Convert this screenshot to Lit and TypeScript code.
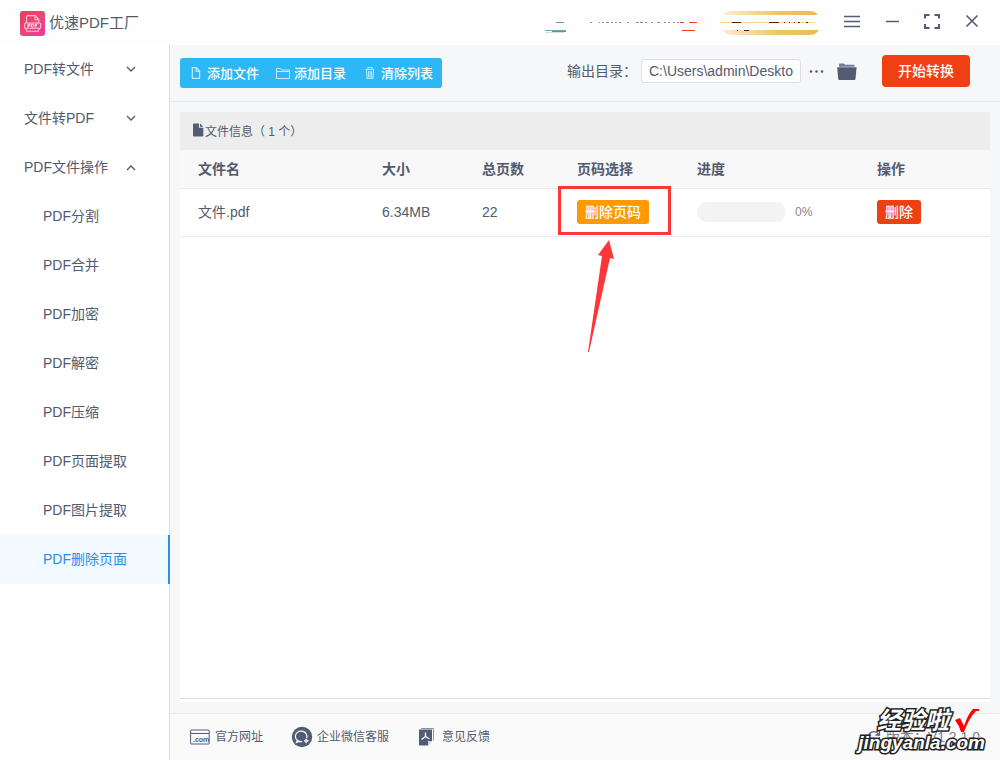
import { LitElement, html, css } from "lit";
import { customElement, property, state } from "lit/decorators.js";
import { classMap } from "lit/directives/class-map.js";

const base = css`
  * {
    box-sizing: border-box;
  }
  button {
    font: inherit;
    color: inherit;
    background: none;
    border: 0;
    padding: 0;
    cursor: pointer;
  }
  svg {
    display: block;
    flex: none;
  }
`;

const groups = [
  { label: "PDF转文件", items: [] as string[] },
  { label: "文件转PDF", items: [] as string[] },
  {
    label: "PDF文件操作",
    items: ["PDF分割", "PDF合并", "PDF加密", "PDF解密", "PDF压缩", "PDF页面提取", "PDF图片提取", "PDF删除页面"],
  },
];

const files = [{ name: "文件.pdf", size: "6.34MB", pages: 22, progress: 0 }];

@customElement("title-bar")
class TitleBar extends LitElement {
  static styles = [
    base,
    css`
      :host {
        display: flex;
        align-items: center;
        height: 45px;
        padding: 0 20px;
        background: #fefefe;
      }
      .brand {
        display: flex;
        align-items: center;
        gap: 4px;
        font-size: 15px;
        line-height: 22px;
        margin-right: auto;
        padding-top: 2px;
      }
      .brand span {
        padding-bottom: 2px;
      }
      .promo {
        margin-right: 22px;
      }
      .window {
        display: flex;
        align-items: center;
        gap: 20px;
        padding-bottom: 3px;
        margin-right: -2px;
      }
    `,
  ];

  render() {
    return html`
      <div class="brand">
        <svg width="25" height="25" viewBox="0 0 25 25">
          <defs>
            <linearGradient id="logo" x1="0" y1="0" x2="1" y2="1">
              <stop offset="0" stop-color="#ea3a5f" />
              <stop offset=".55" stop-color="#ee4679" />
              <stop offset="1" stop-color="#ef35a4" />
            </linearGradient>
          </defs>
          <rect width="25" height="25" rx="3" fill="url(#logo)" />
          <g fill="none" stroke="#fbc3d2" stroke-width="1.1">
            <path d="M6.500 12V5.800q0-1.200 1.200-1.200h7.600l3.500 4.200V12M15 4.800v3.800h3.800" />
            <rect x="4.600" y="12" width="16" height="5.200" rx="1" />
            <path d="M5.600 17.200l1.400 3h11.200l1.400-3" />
          </g>
          <g fill="none" stroke="#fff" stroke-width=".9">
            <path d="M8 16.400v-3.200h1.200a.8.8 0 010 1.700H8M11.400 13.200v2.800h.8a1.400 1.400 0 000-2.800zM15.200 16.400v-3.200h2.300M15.200 14.800h1.800" />
          </g>
        </svg>
        <span>优速PDF工厂</span>
      </div>
      <svg class="promo" width="276" height="27" viewBox="0 0 276 27">
        <defs>
          <linearGradient id="gold">
            <stop offset="0" stop-color="#fcecd0" />
            <stop offset=".6" stop-color="#efc467" />
            <stop offset="1" stop-color="#ecb95a" />
          </linearGradient>
        </defs>
        <g fill="none">
          <path d="M12 13.500h8" stroke="#718e9c" />
          <path d="M1 21.500h21" stroke="#6fa9ae" />
          <path d="M8 22.500h14" stroke="#5a959c" />
          <path d="M1 23.500h19" stroke="#cfe3e5" />
          <path d="M46 13.500h2m7 0h1m2 0h2m2 0h3m2 0h2m2 0h2m2 0h2m6 0h2m7 0h3m1 0h3m2 0h2m4 0h2m4 0h3m4 0h2m2 0h2m3 0h2m2 0h2m3 0h2" stroke="#8790a2" />
          <path d="M136 13.500h4m5 0h8M138 21.500h13" stroke="#ee4318" />
        </g>
        <path d="M179 6q4-4 9-4h77q6 0 9 4z" fill="url(#gold)" />
        <path d="M178 21h97q-3 5-10 5h-77q-6 0-10-5z" fill="url(#gold)" />
        <path d="M176 13.500h95" stroke="url(#gold)" fill="none" />
        <rect x="176" y="13" width="95" height="1" fill="#f6d58f" />
        <path d="M188 13.500h9m28 0h10m5 0h1m4 0h1m4 0h1m3 0h2m6 0h2m-71 8h1m6 0h5" stroke="#5b1510" fill="none" />
      </svg>
      <div class="window">
        <button aria-label="菜单">
          <svg width="20" height="20" viewBox="0 0 20 20" fill="none" stroke="#525c73" stroke-width="1.600">
            <path d="M2 5.500h16M2 10.500h16M2 15.500h16" />
          </svg>
        </button>
        <button aria-label="最小化">
          <svg width="20" height="20" viewBox="0 0 20 20" fill="none" stroke="#525c73" stroke-width="1.500">
            <path d="M4 10.500h13" />
          </svg>
        </button>
        <button aria-label="最大化">
          <svg width="20" height="20" viewBox="0 0 20 20" fill="none" stroke="#525c73" stroke-width="2">
            <path d="M3 7.500V4h4.500M12.500 4H17v3.500M17 13v4h-4.500M7.500 17H3v-4" />
          </svg>
        </button>
        <button aria-label="关闭">
          <svg width="20" height="20" viewBox="0 0 20 20" fill="none" stroke="#525c73" stroke-width="1.600">
            <path d="M4.500 4.500l11 11M15.500 4.500l-11 11" />
          </svg>
        </button>
      </div>
    `;
  }
}

@customElement("side-nav")
class SideNav extends LitElement {
  @state() private open = "PDF文件操作";
  @state() private active = "PDF删除页面";

  static styles = [
    base,
    css`
      :host {
        display: block;
        width: 170px;
        background: #fff;
        border-right: 1px solid #dcdee2;
        font-size: 14px;
      }
      .group,
      .item {
        display: flex;
        align-items: center;
        width: 100%;
        height: 49px;
        text-align: left;
      }
      .group {
        justify-content: space-between;
        padding: 0 32px 3px 24px;
      }
      .group svg {
        margin-top: 2px;
      }
      .item {
        width: 170px;
        padding: 0 0 3px 43px;
      }
      .active {
        color: #2d8cf0;
        background: #f0faff;
        border-right: 2px solid #2d8cf0;
      }
    `,
  ];

  render() {
    return html`<nav>
      ${groups.map((g) => {
        const open = g.label === this.open;
        return html`
          <button class="group" aria-expanded=${open} @click=${() => (this.open = open ? "" : g.label)}>
            <span>${g.label}</span>
            <svg width="12" height="12" viewBox="0 0 12 12" fill="none" stroke="currentColor" stroke-width="1.300">
              <path d=${open ? "M2 9l4-4 4 4" : "M2 4l4 4 4-4"} />
            </svg>
          </button>
          ${open
            ? g.items.map(
                (i) => html`<button
                  class=${classMap({ item: true, active: i === this.active })}
                  @click=${() => (this.active = i)}
                >
                  ${i}
                </button>`
              )
            : ""}
        `;
      })}
    </nav>`;
  }
}

@customElement("tool-bar")
class ToolBar extends LitElement {
  static styles = [
    base,
    css`
      :host {
        display: flex;
        align-items: center;
        height: 57px;
        padding: 0 30px 0 10px;
        border-bottom: 1px solid #e8eaec;
      }
      .actions {
        display: flex;
        gap: 17px;
        height: 30px;
        padding: 0 9px 2px;
        margin-right: auto;
        border-radius: 3px;
        background: #2db7f5;
        color: #fff;
        font-size: 13px;
        font-weight: 500;
      }
      .actions button {
        display: flex;
        align-items: center;
        gap: 4px;
      }
      .actions svg {
        margin-top: 2px;
      }
      .output {
        display: flex;
        align-items: center;
        font-size: 14px;
      }
      .output label {
        padding-bottom: 6px;
      }
      .path {
        width: 160px;
        height: 24px;
        margin: 0 6px 4px 4px;
        padding: 0 7px;
        border: 1px solid #dcdee2;
        border-radius: 3px;
        background: #fff;
        color: inherit;
        font: inherit;
      }
      .more,
      .folder {
        padding-bottom: 4px;
      }
      .folder {
        margin: 0 24px 0 9px;
      }
      .start {
        width: 88px;
        height: 32px;
        margin-bottom: 4px;
        padding-bottom: 2px;
        border-radius: 4px;
        background: #ef4014;
        color: #fff;
        font-weight: 500;
      }
    `,
  ];

  render() {
    return html`
      <div class="actions">
        <button>
          <svg width="14" height="14" viewBox="0 0 14 14" fill="none" stroke="#c3eafd" stroke-width="1.200">
            <path d="M3.300 1.600h4l3.300 3.500v7.300H3.300zM7.200 1.600v3.700h3.400" />
          </svg>
          添加文件
        </button>
        <button>
          <svg width="14" height="14" viewBox="0 0 14 14" fill="none" stroke="#c3eafd" stroke-width="1">
            <path d="M.5 12.500v-10h4l1 1.500h8v8.500zM.5 5.500h13" />
          </svg>
          添加目录
        </button>
        <button>
          <svg width="14" height="14" viewBox="0 0 14 14" fill="none" stroke="#a9e1fb" stroke-width="1.200">
            <path d="M2.500 3.500h9M5 3V1.500h4V3M3.500 4l.5 8.400h6l.5-8.400M5.500 5v6.500M7 5v6.500M8.500 5v6.500" />
          </svg>
          清除列表
        </button>
      </div>
      <div class="output">
        <label for="path">输出目录：</label>
        <input id="path" class="path" value="C:\\Users\\admin\\Deskto" />
        <button class="more" aria-label="更多">
          <svg width="20" height="20" viewBox="0 0 20 20" fill="#525c73">
            <circle cx="4" cy="10.500" r="1.300" />
            <circle cx="9.500" cy="10.500" r="1.300" />
            <circle cx="15" cy="10.500" r="1.300" />
          </svg>
        </button>
        <button class="folder" aria-label="打开目录">
          <svg width="22" height="20" viewBox="0 0 22 20" fill="#525c73">
            <path d="M3 3.500q0-1 1-1h4l1 1.300h9.500v2H3z" opacity=".8" />
            <path d="M1.200 6.200h19.400L19.500 18q-.1 1-1.100 1H3.300q-1 0-1.100-1z" />
          </svg>
        </button>
        <button class="start">开始转换</button>
      </div>
    `;
  }
}

@customElement("file-panel")
class FilePanel extends LitElement {
  @property({ attribute: false }) files = files;

  static styles = [
    base,
    css`
      :host {
        display: flex;
        flex-direction: column;
        background: #fff;
        padding-bottom: 3px;
      }
      .info {
        display: flex;
        align-items: center;
        height: 38px;
        padding: 0 0 2px 12px;
        background: #ededed;
        font-size: 12px;
      }
      .body {
        flex: 1;
        border-bottom: 1px solid #dcdee2;
      }
      table {
        width: 100%;
        table-layout: fixed;
        border-collapse: separate;
        border-spacing: 0;
        font-size: 14px;
        line-height: 20px;
      }
      th,
      td {
        padding: 0 0 0 18px;
        text-align: left;
        border-bottom: 1px solid #e8eaec;
      }
      th {
        height: 39px;
        background: #f8f8f9;
        font-weight: 700;
      }
      td {
        height: 48px;
        padding-bottom: 2px;
      }
      .size {
        width: 100px;
      }
      .pages {
        width: 95px;
      }
      .select {
        width: 120px;
      }
      .progress {
        width: 180px;
      }
      .action {
        width: 131px;
      }
      .tag {
        display: block;
        height: 24px;
        padding: 0 8px;
        border-radius: 3px;
        color: #fff;
        background: #ff9900;
        font-weight: 500;
      }
      .danger {
        background: #ef4014;
      }
      .marked {
        position: relative;
        width: 72px;
      }
      .frame {
        position: absolute;
        left: -19px;
        top: -14px;
        width: 113px;
        height: 49px;
        border: 3px solid #fc3737;
        pointer-events: none;
      }
      .arrow {
        position: absolute;
        left: 9px;
        top: 40px;
      }
      .meter {
        display: flex;
        align-items: center;
        gap: 9px;
        font-size: 12px;
        color: #808695;
      }
      .track {
        width: 89px;
        height: 20px;
        border-radius: 10px;
        background: #f3f3f3;
        overflow: hidden;
      }
      .bar {
        height: 100%;
        background: #2db7f5;
      }
    `,
  ];

  render() {
    return html`
      <div class="info">
        <svg width="13" height="14" viewBox="0 0 13 14" fill="#525c73">
          <path d="M1 1.500q0-1 1-1h5v4.300h4.300V12.500q0 1-1 1H2q-1 0-1-1zM8 .5l3.300 3.300H8z" />
        </svg>
        <span>文件信息（ ${this.files.length} 个）</span>
      </div>
      <div class="body">
        <table>
          <thead>
            <tr>
              <th>文件名</th>
              <th class="size">大小</th>
              <th class="pages">总页数</th>
              <th class="select">页码选择</th>
              <th class="progress">进度</th>
              <th class="action">操作</th>
            </tr>
          </thead>
          <tbody>
            ${this.files.map(
              (f) => html`<tr>
                <td>${f.name}</td>
                <td>${f.size}</td>
                <td>${f.pages}</td>
                <td>
                  <div class="marked">
                    <button class="tag">删除页码</button>
                    <div class="frame"></div>
                    <svg class="arrow" width="32" height="114" viewBox="0 0 32 114" fill="#fc3737">
                      <path d="M23 0L28 19 24 18 3 112H2L16 16 12 15z" />
                    </svg>
                  </div>
                </td>
                <td>
                  <div class="meter">
                    <div class="track"><div class="bar" style="width:${f.progress}%"></div></div>
                    <span>${f.progress}%</span>
                  </div>
                </td>
                <td><button class="tag danger">删除</button></td>
              </tr>`
            )}
          </tbody>
        </table>
      </div>
    `;
  }
}

@customElement("status-bar")
class StatusBar extends LitElement {
  static styles = [
    base,
    css`
      :host {
        display: flex;
        align-items: center;
        gap: 28px;
        height: 47px;
        padding: 0 20px;
        border-top: 1px solid #e8eaec;
        background: #fafafa;
        font-size: 12px;
      }
      a {
        display: flex;
        align-items: center;
        gap: 4px;
        color: inherit;
        text-decoration: none;
      }
      span {
        padding-bottom: 3px;
      }
      .version {
        display: flex;
        align-items: center;
        gap: 5px;
        margin-left: auto;
        font-size: 14px;
        color: #7b8294;
      }
      .domain {
        font: 700 7px "Liberation Sans", sans-serif;
      }
    `,
  ];

  render() {
    return html`
      <a href="#site">
        <svg width="21" height="20" viewBox="0 0 21 20" fill="none" stroke="#525c73">
          <rect x=".6" y="3" width="18.600" height="14" rx=".5" />
          <path d="M1 6.500h18" />
          <text class="domain" x="3" y="15" fill="#525c73" stroke="none">.com</text>
        </svg>
        <span>官方网址</span>
      </a>
      <a href="#wechat">
        <svg width="22" height="22" viewBox="0 0 22 22">
          <circle cx="11" cy="11" r="10.200" fill="#525c73" />
          <g fill="none" stroke="#fff" stroke-width="1.200">
            <path d="M15.700 12a5.800 5.300 0 10-4.500 3.600M6.500 14l-1 2.500 3-1.200" />
            <path d="M13 14.800q2-.2 2.200-2.200.3 2 2.400 2.200-2.100.3-2.400 2.400-.2-2.200-2.200-2.400z" fill="#dfe2e8" stroke-width=".7" />
          </g>
        </svg>
        <span>企业微信客服</span>
      </a>
      <a href="#feedback">
        <svg width="21" height="20" viewBox="0 0 21 20">
          <path d="M4 1.500h12.500v12" fill="none" stroke="#8c93a2" />
          <path d="M2 2.500h13v11L11 18.500H3q-1 0-1-1z" fill="#525c73" />
          <path d="M11 18.500v-4.500h4z" fill="#d4d7de" />
          <path d="M8.500 5.500v4l-4 3M8.500 9.500l4 2.500" fill="none" stroke="#fff" stroke-width="1.300" />
        </svg>
        <span>意见反馈</span>
      </a>
      <div class="version">
        <svg width="14" height="14" viewBox="0 0 14 14" fill="none" stroke="#525c73" stroke-width="1.300">
          <path d="M1.500 7a5.500 5.500 0 0110-3M12.500 1v4h-4M12.500 7a5.500 5.500 0 01-10 3" />
        </svg>
        <span>版本：V1.2.1.0</span>
      </div>
    `;
  }
}

@customElement("app-root")
class AppRoot extends LitElement {
  static styles = [
    base,
    css`
      :host {
        display: flex;
        flex-direction: column;
        min-height: 100vh;
        position: relative;
        background: #fff;
        color: #515a6e;
        font-family: "Liberation Sans", "Noto Sans CJK SC", sans-serif;
      }
      .layout {
        display: flex;
        flex: 1;
      }
      main {
        flex: 1;
        min-width: 0;
        display: flex;
        flex-direction: column;
        background: #f5f7f9;
      }
      file-panel {
        flex: 1;
        margin: 10px 10px 11px;
      }
      .mark {
        position: absolute;
        right: 15px;
        bottom: 7px;
        pointer-events: none;
        color: #fff;
        text-align: right;
        font-style: italic;
        font-weight: 700;
        -webkit-text-stroke: 3px #222;
        paint-order: stroke fill;
      }
      .mark-name {
        display: flex;
        justify-content: flex-end;
        align-items: center;
        gap: 6px;
        padding-right: 6px;
        font-size: 24px;
        line-height: 24px;
      }
      .mark-site {
        font-size: 19px;
        line-height: 20px;
      }
    `,
  ];

  render() {
    return html`
      <title-bar></title-bar>
      <div class="layout">
        <side-nav></side-nav>
        <main>
          <tool-bar></tool-bar>
          <file-panel></file-panel>
          <status-bar></status-bar>
        </main>
      </div>
      <div class="mark">
        <div class="mark-name">
          <span>经验啦</span>
          <svg width="24" height="24" viewBox="0 0 24 24" fill="#f00">
            <path d="M0 11l5-2 4 8Q13 5 18 0h6v2h-3Q14 9 9 23H6Q4 16 0 11z" />
          </svg>
        </div>
        <div class="mark-site">jingyanla.com</div>
      </div>
    `;
  }
}
